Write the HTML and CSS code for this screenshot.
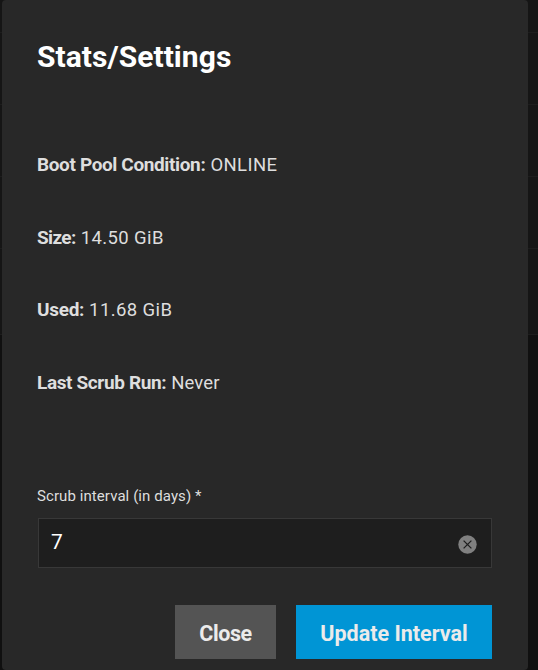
FILE: index.html
```html
<!DOCTYPE html>
<html lang="en">
<head>
  <meta charset="UTF-8" />
  <meta name="viewport" content="width=device-width, initial-scale=1.0"/>
  <title>Stats/Settings</title>
  <link rel="stylesheet" href="styles.css">
</head>
<body>

  <div class="dialog">
    <h1 class="title">Stats/Settings</h1>

    <div class="stats">
      <div class="stat"><strong>Boot Pool Condition:</strong><span class="amount">ONLINE</span></div>
      <div class="stat"><strong class="size">Size:</strong><span class="amount">14.50 GiB</span></div>
      <div class="stat"><strong class="used">Used:</strong><span class="amount">11.68 GiB</span></div>
      <div class="stat"><strong>Last Scrub Run:</strong><span>Never</span></div>
    </div>

    <label class="field-label" for="interval">Scrub interval (in days) *</label>
    <div class="field">
      <input id="interval" type="text" value="7">
      <svg class="clear" viewBox="0 0 19 19">
        <circle cx="9.5" cy="9.5" r="9.2"/>
        <path d="M5.6 5.6l7.8 7.8M13.4 5.6l-7.8 7.8"/>
      </svg>
    </div>

    <div class="actions">
      <button class="btn close">Close</button>
      <button class="btn update">Update Interval</button>
    </div>
  </div>

</body>
</html>
```

FILE: styles.css
```css
* {
  box-sizing: border-box;
}

body {
  margin: 0;
  height: 670px;
  padding: 0 10px 0 2px;
  overflow: hidden;
  font-family: Roboto, sans-serif;
  color: #dedede;
  /* table rows showing behind the dialog */
  background:
    linear-gradient(#1d1d1d, #1d1d1d) 0 32px / 100% 1px no-repeat,
    linear-gradient(#1d1d1d, #1d1d1d) 0 104px / 100% 1px no-repeat,
    linear-gradient(#1d1d1d, #1d1d1d) 0 176px / 100% 1px no-repeat,
    linear-gradient(#1d1d1d, #1d1d1d) 0 248px / 100% 1px no-repeat,
    linear-gradient(#1d1d1d, #1d1d1d) 0 334px / 100% 1px no-repeat,
    linear-gradient(#151515 335px, #101010 335px);
}

.dialog {
  height: 670px;
  padding: 37px 36px 0 35px;
  background: #282828;
  border-radius: 4px;
}

.title {
  margin: 0;
  font-size: 30px;
  line-height: 40px;
  font-weight: 700;
  color: #fff;
  letter-spacing: 0.05px;
  white-space: nowrap;
}

.stats {
  margin-top: 51px;
}

.stat {
  display: flex;
  align-items: baseline;
  gap: 5px;
  height: 72.7px;
  font-size: 18.5px;
  line-height: 73px;
  white-space: nowrap;
}

.stat strong {
  font-size: 19px;
  font-weight: 700;
  letter-spacing: -0.37px;
}

.stat .size {
  letter-spacing: -0.65px;
}

.stat .used {
  letter-spacing: -0.3px;
}

.stat span {
  letter-spacing: 0.1px;
}

.stat .amount {
  letter-spacing: 0.4px;
}

.field-label {
  display: block;
  margin-top: 67px;
  font-size: 15px;
  line-height: 20px;
  letter-spacing: 0.08px;
  white-space: nowrap;
}

.field {
  display: flex;
  align-items: center;
  height: 50px;
  margin: 12px 0 0 1px;
  padding: 0 14px 0 12px;
  background: #1e1e1e;
  border: 1px solid #383838;
}

.field input {
  flex: 1;
  min-width: 0;
  padding: 0 0 1px;
  border: 0;
  outline: 0;
  background: none;
  color: #fff;
  font: 21px Roboto, sans-serif;
}

.clear {
  width: 19px;
  height: 19px;
  margin-top: 3px;
}

.clear circle {
  fill: #808080;
}

.clear path {
  fill: none;
  stroke: #1e1e1e;
  stroke-width: 1.3;
}

.actions {
  display: flex;
  justify-content: flex-end;
  gap: 20px;
  margin-top: 37px;
}

.btn {
  height: 54px;
  padding: 3px 0 0;
  border: 0;
  font: 700 21.5px Roboto, sans-serif;
  color: #ebebeb;
  white-space: nowrap;
}

.close {
  width: 101px;
  background: #545454;
  letter-spacing: -0.4px;
}

.update {
  width: 196px;
  background: #0095d5;
}
```
